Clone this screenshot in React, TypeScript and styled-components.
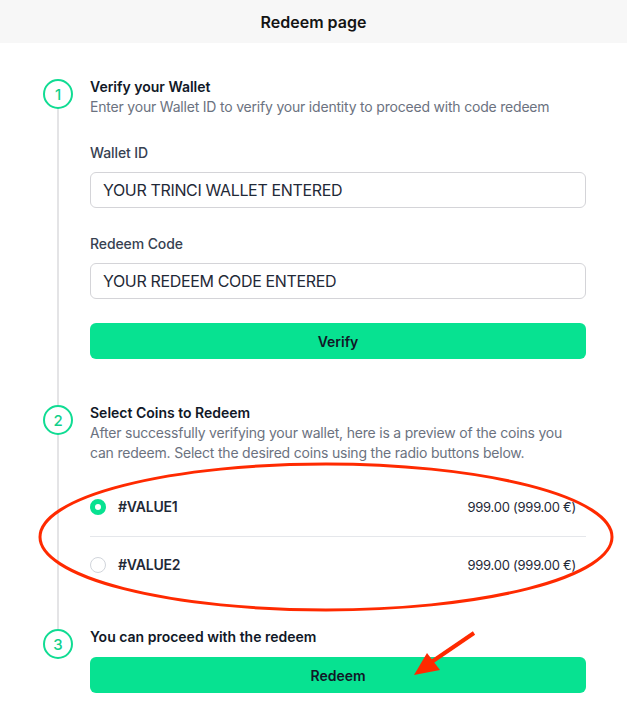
import { FC } from 'react';
import styled, { createGlobalStyle } from 'styled-components';

const GlobalStyle = createGlobalStyle`
    html, body {
        margin:0;
        padding:0;
        background:white;
        font-family:Inter, "Noto Sans", sans-serif;
        -webkit-font-smoothing:antialiased;
    }
    * { box-sizing:border-box; }
`;

const Page = styled.div`
    position:relative;
    width:100%;
    min-height:727px;
`;
const Header = styled.header`
    height:43px;
    display:flex;
    align-items:center;
    justify-content:center;
    background-color:#f7f7f7;
    font-size:16px;
    font-weight:600;
    color:#141414;
`;
const Steps = styled.div`
    position:relative;
    display:flex;
    flex-direction:column;
    gap:44px;
    padding:34px 41px 0 43px;
    &::before{
        content:"";
        position:absolute;
        left:57px;
        top:60px;
        bottom:64px;
        width:2px;
        background-color:#e4e4e6;
    }
`;
const Step = styled.section`
    display:grid;
    grid-template-columns:30px 1fr;
    column-gap:17px;
`;
const StepNumber = styled.div`
    position:relative;
    z-index:1;
    width:30px;
    height:30px;
    margin-top:2px;
    border:2px solid #10dc93;
    border-radius:50%;
    background:white;
    color:#10d08b;
    display:flex;
    align-items:center;
    justify-content:center;
    font-size:15px;
    font-weight:500;
`;
const StepBody = styled.div`
    display:flex;
    flex-direction:column;
    min-width:0;
`;
const StepTitle = styled.h2`
    margin:0;
    font-size:14px;
    line-height:20px;
    font-weight:600;
    color:#111827;
`;
const StepText = styled.p`
    margin:0;
    font-size:14px;
    line-height:20px;
    letter-spacing:-0.2px;
    color:#6b7280;
`;
const Label = styled.label`
    display:block;
    margin-top:26px;
    font-size:14px;
    line-height:20px;
    font-weight:500;
    letter-spacing:-0.1px;
    color:#374151;
`;
const Input = styled.input`
    display:block;
    width:100%;
    height:36px;
    margin-top:9px;
    padding:0 12px;
    border:1px solid #d4d4d8;
    border-radius:6px;
    font-family:inherit;
    font-size:16px;
    letter-spacing:-0.35px;
    color:#1f2937;
    background:white;
    outline:none;
`;
const Button = styled.button<{ $top: number }>`
    width:100%;
    height:36px;
    margin-top:${p => p.$top}px;
    border:none;
    border-radius:6px;
    background-color:#07e291;
    font-family:inherit;
    font-size:14px;
    font-weight:600;
    color:#111827;
    cursor:pointer;
`;
const CoinList = styled.div`
    margin-top:16px;
`;
const CoinRow = styled.label`
    display:flex;
    align-items:center;
    gap:12px;
    padding:18px 10px 19px 0;
    font-size:14px;
    line-height:20px;
    & + &{
        border-top:1px solid #e5e7eb;
    }
    &:last-child{
        padding-bottom:8px;
    }
`;
const Radio = styled.span<{ $checked?: boolean }>`
    width:16px;
    height:16px;
    border-radius:50%;
    flex-shrink:0;
    background:white;
    border:${p => (p.$checked ? '5px solid #07e291' : '1px solid #d1d5db')};
`;
const CoinName = styled.span`
    flex:1;
    font-weight:600;
    color:#1f2937;
    letter-spacing:-0.2px;
`;
const CoinValue = styled.span`
    font-size:13px;
    letter-spacing:-0.25px;
    color:#1f2937;
`;
const Annotation = styled.svg`
    position:absolute;
    top:0;
    left:0;
    width:627px;
    height:727px;
    pointer-events:none;
`;

const coins = [
    { name: '#VALUE1', value: '999.00 (999.00 €)', checked: true },
    { name: '#VALUE2', value: '999.00 (999.00 €)', checked: false },
];

const App: FC = () => {
    return (
        <Page>
            <GlobalStyle />
            <Header>Redeem page</Header>
            <Steps>
                <Step>
                    <StepNumber>1</StepNumber>
                    <StepBody>
                        <StepTitle>Verify your Wallet</StepTitle>
                        <StepText>Enter your Wallet ID to verify your identity to proceed with code redeem</StepText>
                        <Label>Wallet ID</Label>
                        <Input defaultValue="YOUR TRINCI WALLET ENTERED" />
                        <Label>Redeem Code</Label>
                        <Input defaultValue="YOUR REDEEM CODE ENTERED" />
                        <Button $top={24}>Verify</Button>
                    </StepBody>
                </Step>
                <Step>
                    <StepNumber>2</StepNumber>
                    <StepBody>
                        <StepTitle>Select Coins to Redeem</StepTitle>
                        <StepText>
                            After successfully verifying your wallet, here is a preview of the coins you can redeem. Select the desired coins using the radio buttons below.
                        </StepText>
                        <CoinList>
                            {coins.map(c => (
                                <CoinRow key={c.name}>
                                    <Radio $checked={c.checked} />
                                    <CoinName>{c.name}</CoinName>
                                    <CoinValue>{c.value}</CoinValue>
                                </CoinRow>
                            ))}
                        </CoinList>
                    </StepBody>
                </Step>
                <Step>
                    <StepNumber>3</StepNumber>
                    <StepBody>
                        <StepTitle>You can proceed with the redeem</StepTitle>
                        <Button $top={10}>Redeem</Button>
                    </StepBody>
                </Step>
            </Steps>
            <Annotation viewBox="0 0 627 727">
                <ellipse cx="326" cy="537" rx="286" ry="73" fill="none" stroke="#ff2a00" strokeWidth="3" />
                <line x1="474" y1="633" x2="430" y2="663" stroke="#ff2a00" strokeWidth="4" />
                <polygon points="414,675 427,653 440,670" fill="#ff2a00" />
            </Annotation>
        </Page>
    );
};

export default App;
